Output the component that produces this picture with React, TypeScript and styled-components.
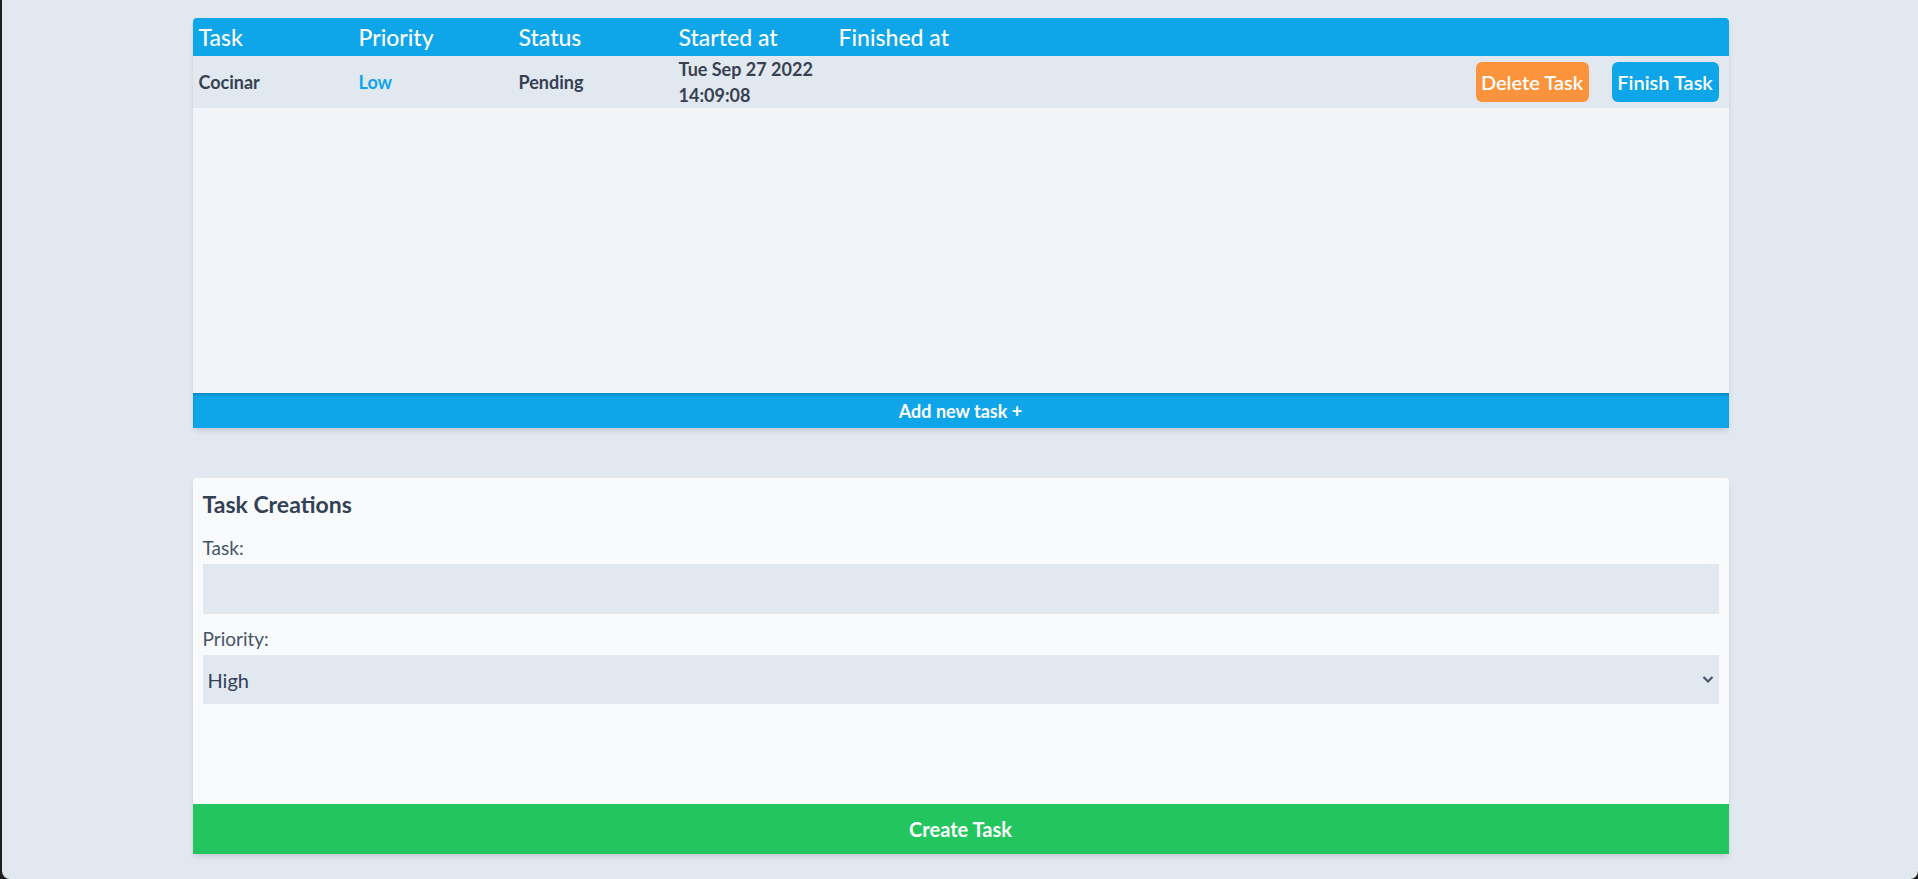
import React from "react";
import styled, { createGlobalStyle } from "styled-components";

const GlobalStyle = createGlobalStyle`
  html, body {
    margin: 0;
    padding: 0;
    background: #1f1f1f;
  }
  * { box-sizing: border-box; }
  body {
    font-family: Lato, "Noto Sans", "Liberation Sans", sans-serif;
  }
`;

const Screen = styled.div`
  margin-left: 2px;
  padding-left: 1px;
  height: 879px;
  background: #e2e8f0;
  border-radius: 0 0 8px 8px;
  padding-top: 18px;
  display: flex;
  flex-direction: column;
  align-items: center;
  gap: 50px;
  overflow: hidden;
`;

const Card = styled.section<{ $bg: string }>`
  width: 1536px;
  background: ${(p) => p.$bg};
  box-shadow: 0 4px 6px -1px rgba(15, 23, 42, 0.1), 0 2px 4px -2px rgba(15, 23, 42, 0.1);
  display: flex;
  flex-direction: column;
  border-radius: 4px 4px 0 0;
  overflow: hidden;
`;

const Grid = styled.div`
  display: grid;
  grid-template-columns: repeat(5, 160px) 1fr;
  align-items: center;
  padding-left: 6px;
`;

const HeaderRow = styled(Grid)`
  height: 38px;
  background: #0ea5e9;
  color: #ffffff;
  font-size: 23px;
  font-weight: 500;
  line-height: 38px;
`;

const Body = styled.div`
  height: 337px;
  background: #f1f5f9;
`;

const TaskRow = styled(Grid)`
  height: 52px;
  background: #e2e8f0;
  font-size: 18px;
  font-weight: 700;
  line-height: 26px;
  color: #374151;
`;

const Cell = styled.div<{ $color?: string }>`
  color: ${(p) => p.$color || "inherit"};
`;

const DateCell = styled.div`
  white-space: nowrap;
`;

const Actions = styled.div`
  display: flex;
  justify-content: flex-end;
  gap: 23px;
  padding-right: 10px;
`;

const ActionButton = styled.button<{ $bg: string; $w: number }>`
  width: ${(p) => p.$w}px;
  height: 40px;
  border: none;
  border-radius: 6px;
  background: ${(p) => p.$bg};
  color: #ffffff;
  font-family: inherit;
  font-size: 20px;
  font-weight: 600;
  padding: 0;
  cursor: pointer;
`;

const AddBar = styled.button`
  height: 35px;
  border: none;
  background: #0ea5e9;
  color: #ffffff;
  font-family: inherit;
  font-size: 18px;
  font-weight: 700;
  box-shadow: inset 0 3px 4px -2px rgba(0, 0, 0, 0.25);
  cursor: pointer;
`;

const Form = styled.form`
  height: 376px;
  display: flex;
  flex-direction: column;
`;

const Fields = styled.div`
  padding: 11px 10px 0 10px;
  display: flex;
  flex-direction: column;
`;

const Title = styled.h2`
  margin: 0 0 16px 0;
  font-size: 23px;
  line-height: 30px;
  font-weight: 700;
  color: #334155;
`;

const Label = styled.label`
  font-size: 19px;
  line-height: 26px;
  color: #475569;
  margin-bottom: 3px;
`;

const TextInput = styled.input`
  height: 50px;
  border: none;
  outline: none;
  background: #e2e8f0;
  font-family: inherit;
  font-size: 20px;
  padding: 0 5px;
  margin-bottom: 12px;
  color: #334155;
`;

const SelectWrap = styled.div`
  position: relative;
`;

const Select = styled.select`
  width: 100%;
  height: 49px;
  border: none;
  outline: none;
  border-radius: 0;
  appearance: none;
  background: #e2e8f0;
  font-family: inherit;
  font-size: 20px;
  padding: 0 5px;
  color: #334155;
`;

const Chevron = styled.svg`
  position: absolute;
  right: 5px;
  top: 20px;
  pointer-events: none;
`;

const CreateBar = styled.button`
  margin-top: auto;
  height: 50px;
  border: none;
  background: #22c55e;
  color: #ffffff;
  font-family: inherit;
  font-size: 20px;
  font-weight: 700;
  cursor: pointer;
`;

export default function App() {
  return (
    <>
      <GlobalStyle />
      <Screen>
        <Card $bg="#f1f5f9">
          <HeaderRow>
            <Cell>Task</Cell>
            <Cell>Priority</Cell>
            <Cell>Status</Cell>
            <Cell>Started at</Cell>
            <Cell>Finished at</Cell>
            <Cell />
          </HeaderRow>
          <Body>
            <TaskRow>
              <Cell>Cocinar</Cell>
              <Cell $color="#0ea5e9">Low</Cell>
              <Cell>Pending</Cell>
              <DateCell>
                Tue Sep 27 2022
                <br />
                14:09:08
              </DateCell>
              <Cell />
              <Actions>
                <ActionButton type="button" $bg="#fb923c" $w={113}>
                  Delete Task
                </ActionButton>
                <ActionButton type="button" $bg="#0ea5e9" $w={107}>
                  Finish Task
                </ActionButton>
              </Actions>
            </TaskRow>
          </Body>
          <AddBar type="button">Add new task +</AddBar>
        </Card>
        <Card $bg="#f8fafc">
          <Form onSubmit={(e) => e.preventDefault()}>
            <Fields>
              <Title>Task Creations</Title>
              <Label htmlFor="task">Task:</Label>
              <TextInput id="task" type="text" />
              <Label htmlFor="priority">Priority:</Label>
              <SelectWrap>
                <Select id="priority" defaultValue="High">
                  <option>High</option>
                  <option>Medium</option>
                  <option>Low</option>
                </Select>
                <Chevron width="12" height="9" viewBox="0 0 12 9">
                  <path d="M1.5 2 L6 6.5 L10.5 2" fill="none" stroke="#475569" strokeWidth="2.2" />
                </Chevron>
              </SelectWrap>
            </Fields>
            <CreateBar type="submit">Create Task</CreateBar>
          </Form>
        </Card>
      </Screen>
    </>
  );
}
